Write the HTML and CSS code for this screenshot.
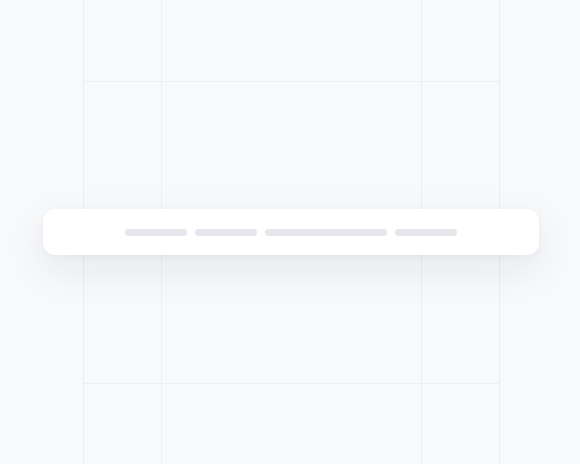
FILE: index.html
```html
<!DOCTYPE html>
<html lang="en">
<head>
<meta charset="utf-8">
<title>Skeleton bar</title>
<link rel="stylesheet" href="styles.css">
</head>
<body>
<div class="stage">
  <div class="grid">
    <div class="cell"></div><div class="cell"></div><div class="cell last"></div>
    <div class="cell"></div><div class="cell"></div><div class="cell last"></div>
    <div class="cell"></div><div class="cell"></div><div class="cell last"></div>
  </div>
  <div class="overlay">
    <div class="card">
      <span class="pill"></span>
      <span class="pill"></span>
      <span class="pill wide"></span>
      <span class="pill"></span>
    </div>
  </div>
</div>
</body>
</html>
```
FILE: styles.css
```css
html, body {
  margin: 0;
  padding: 0;
  background: #f8f9fb;
  font-family: "Inter", "Liberation Sans", sans-serif;
}
.stage {
  position: relative;
  width: 580px;
  height: 464px;
  overflow: hidden;
}
.grid {
  display: grid;
  grid-template-columns: 78px 260px 79px;
  grid-template-rows: 81px 302px 1fr;
  width: 417px;
  height: 100%;
  margin-left: 83px;
}
.cell {
  box-sizing: border-box;
  border-left: 1px solid #eceef1;
  border-top: 1px solid #eceef1;
}
.cell.last {
  border-right: 1px solid #eceef1;
}
.cell:nth-child(-n+3) {
  border-top: none;
}
.overlay {
  position: absolute;
  inset: 0;
  display: flex;
  align-items: center;
  justify-content: center;
  padding-left: 2px;
}
.card {
  width: 496px;
  height: 46px;
  box-sizing: border-box;
  background: #ffffff;
  border-radius: 12px;
  box-shadow: 0 14px 40px rgba(20, 28, 50, 0.08), 0 2px 6px rgba(20, 28, 50, 0.03);
  display: flex;
  align-items: center;
  justify-content: center;
  gap: 8px;
}
.pill {
  display: block;
  width: 62px;
  height: 7px;
  border-radius: 4px;
  background: #e6e7ec;
}
.pill.wide {
  width: 122px;
}
```
